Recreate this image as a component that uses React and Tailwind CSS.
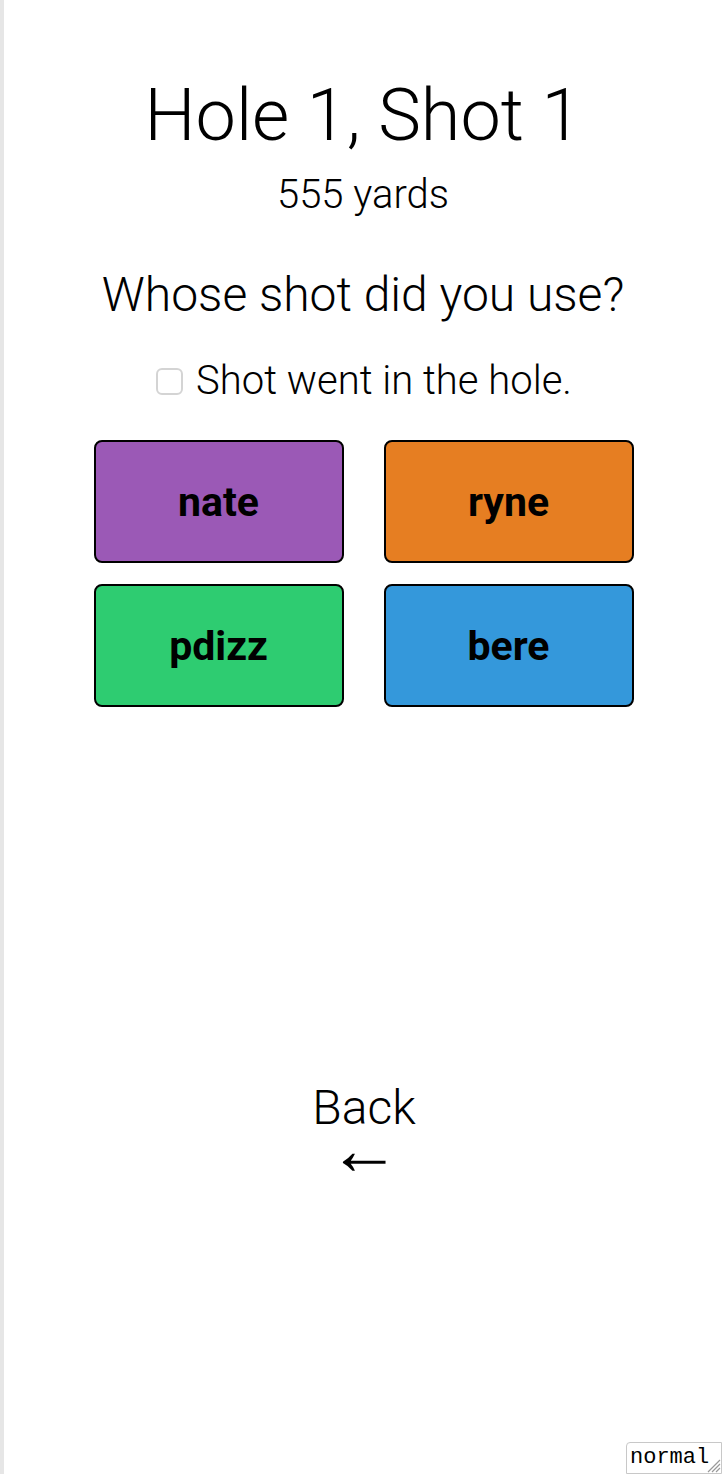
import React from "react";

const players = [
  { name: "nate", bg: "bg-[#9b59b6]" },
  { name: "ryne", bg: "bg-[#e67e22]" },
  { name: "pdizz", bg: "bg-[#2ecc71]" },
  { name: "bere", bg: "bg-[#3498db]" },
];

export default function App() {
  return (
    <div className="relative flex min-h-[1474px] w-full overflow-hidden bg-white font-['Roboto',sans-serif] text-black">
      <div className="w-[4px] shrink-0 bg-[#e6e6e6]" />
      <div className="flex flex-1 flex-col items-center">
        <h1 className="mt-[80px] text-[72px] font-light leading-[72px]">Hole 1, Shot 1</h1>
        <div className="mt-[23px] text-[40px] font-light leading-[40px]">555 yards</div>
        <h2 className="mt-[56px] text-[48px] font-light leading-[48px]">Whose shot did you use?</h2>
        <label className="mt-[42px] flex items-center gap-[13px] pl-[2px] text-[40px] font-light leading-[40px]">
          <span className="h-[27px] w-[27px] rounded-[6px] border-2 border-[#d4d4d4] bg-white" />
          <span>Shot went in the hole.</span>
        </label>
        <div className="mt-[39px] grid grid-cols-[250px_250px] gap-x-[40px] gap-y-[21px] pl-[1px]">
          {players.map((p) => (
            <button
              key={p.name}
              className={`${p.bg} flex h-[123px] items-center justify-center rounded-[8px] border-2 border-black pt-[2px] text-[41px] font-bold`}
            >
              {p.name}
            </button>
          ))}
        </div>
        <button className="mt-[377px] flex flex-col items-center pl-[2px] font-light">
          <span className="text-[48px] leading-[48px]">Back</span>
          <span className="text-[72px] leading-[36px]">←</span>
        </button>
      </div>
      <div className="absolute bottom-0 right-0 flex h-[32px] w-[96px] items-center rounded-tl-[4px] border border-[#c8c8c8] bg-white pl-[3px] font-['Courier_New','Liberation_Mono',monospace] text-[22px] leading-none">
        normal
        <svg className="absolute bottom-0 right-0" width="16" height="16" viewBox="0 0 16 16">
          <path d="M15 3 L3 15 M15 7 L7 15 M15 11 L11 15" stroke="#999" strokeWidth="1.2" />
        </svg>
      </div>
    </div>
  );
}
